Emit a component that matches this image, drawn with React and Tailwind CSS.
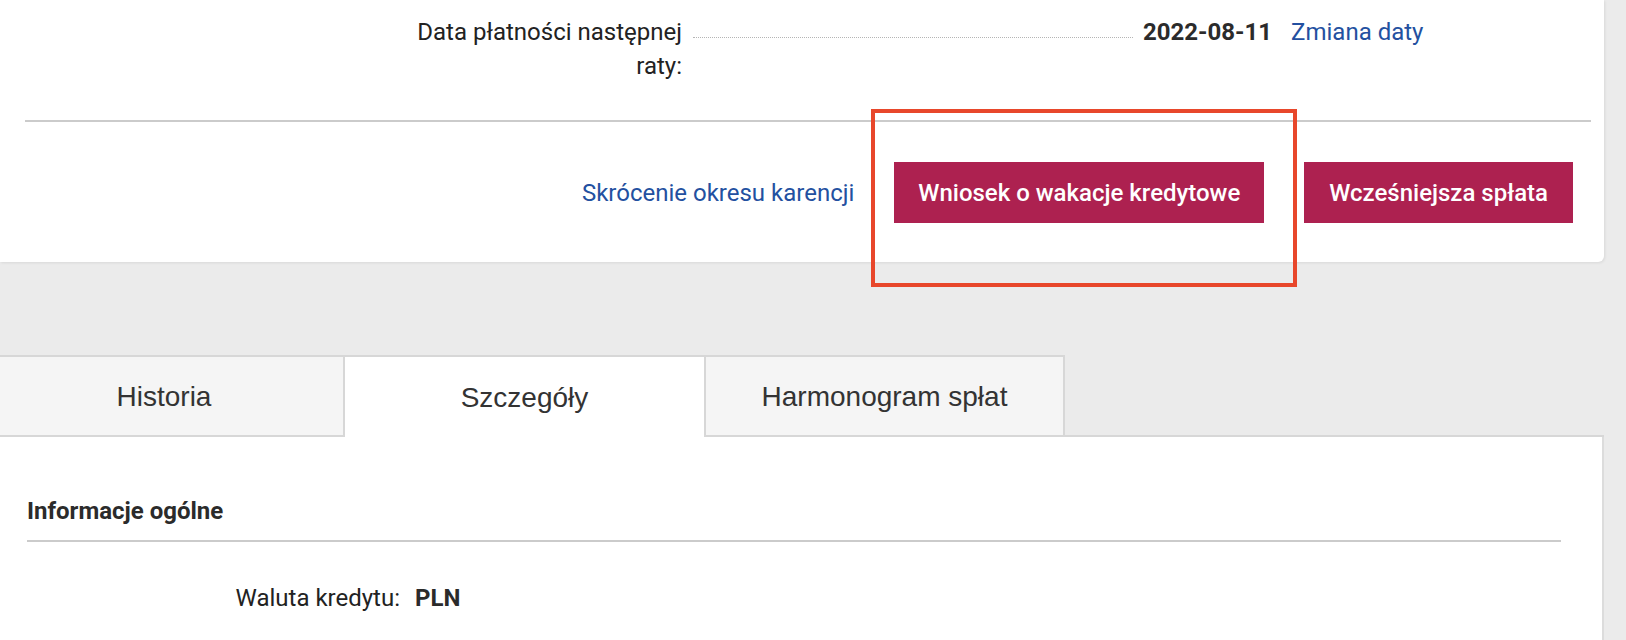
export default function App() {
  return (
    <div className="relative w-[1626px] h-[640px] overflow-hidden bg-[#ebebeb] font-['Roboto',sans-serif] text-[#222]">
      {/* Top card */}
      <div className="w-[1604px] bg-white rounded-br-[6px] shadow-[1px_1px_3px_rgba(0,0,0,0.08)]">
        <div className="flex items-start pt-[15px] text-[24px] leading-[34px]">
          <div className="ml-[412px] w-[270px] text-right">Data płatności następnej raty:</div>
          <div className="ml-[11px] w-[440px] h-[23px] border-b border-dotted border-[#b5b5b5]" />
          <div className="ml-[10px] font-bold text-[#2b2b2b]">2022-08-11</div>
          <a className="ml-[19px] text-[#2350a0]">Zmiana daty</a>
        </div>
        <div className="mt-[37px] ml-[25px] mr-[13px] border-t-2 border-[#cbcbcb]" />
        <div className="flex justify-end items-center gap-[40px] pt-[40px] pb-[39px] pr-[31px] text-[24px]">
          <a className="text-[#2350a0]">Skrócenie okresu karencji</a>
          <button className="h-[61px] px-[24px] bg-[#ad2150] text-white font-medium">Wniosek o wakacje kredytowe</button>
          <button className="h-[61px] px-[25px] bg-[#ad2150] text-white font-medium">Wcześniejsza spłata</button>
        </div>
      </div>

      {/* Tabs */}
      <div className="mt-[93px] flex w-[1604px] font-['Liberation_Sans',Arial,sans-serif] text-[28px] text-[#333]">
        <div className="-ml-[17px] w-[362px] h-[82px] flex items-center justify-center pt-[2px] bg-[#f5f5f5] border-2 border-[#d7d7d7]">Historia</div>
        <div className="w-[359px] h-[82px] flex items-center justify-center pt-[2px] bg-white border-t-2 border-[#d7d7d7]">Szczegóły</div>
        <div className="w-[361px] h-[82px] flex items-center justify-center pt-[2px] bg-[#f5f5f5] border-2 border-[#d7d7d7]">Harmonogram spłat</div>
        <div className="flex-1 h-[82px] border-b-2 border-[#d7d7d7]" />
      </div>

      {/* Panel */}
      <div className="w-[1604px] h-[300px] bg-white border-r-2 border-[#dcdcdc] text-[24px] leading-[34px]">
        <div className="pt-[57px] pl-[27px] font-bold text-[#2b2b2b]">Informacje ogólne</div>
        <div className="mt-[12px] ml-[27px] w-[1534px] border-t-2 border-[#cbcbcb]" />
        <div className="mt-[39px] flex">
          <div className="w-[400px] text-right">Waluta kredytu:</div>
          <div className="ml-[15px] font-bold text-[#2b2b2b]">PLN</div>
        </div>
      </div>

      {/* Annotation box */}
      <div className="absolute left-[871px] top-[109px] w-[426px] h-[178px] border-4 border-[#e8472b]" />
    </div>
  );
}
